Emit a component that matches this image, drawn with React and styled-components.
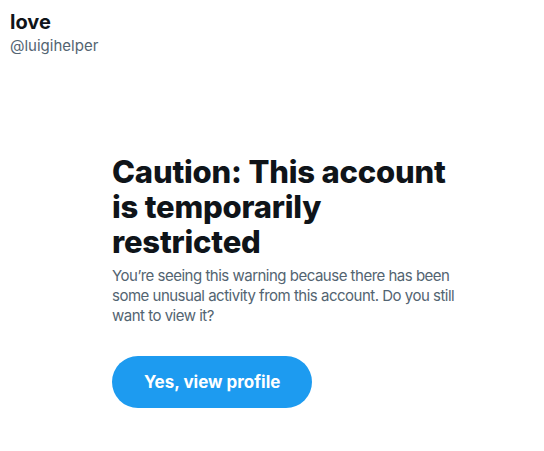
import React from "react";
import styled, {createGlobalStyle} from "styled-components";

const GlobalStyle = createGlobalStyle`
  body {
    margin: 0;
    background: #ffffff;
    font-family: Inter, "Liberation Sans", Arial, sans-serif;
  }
`;

const Page = styled.div`
  width: 544px;
  height: 451px;
  display: flex;
  flex-direction: column;
  background: #ffffff;
`;

const Header = styled.div`
  padding: 10px 10px 0 10px;
  display: flex;
  flex-direction: column;
`;

const Name = styled.div`
  font-size: 20px;
  font-weight: 700;
  line-height: 24px;
  color: #0f1419;
`;

const Handle = styled.div`
  font-size: 15px;
  line-height: 20px;
  color: #536471;
  margin-top: 2px;
`;

const Notice = styled.div`
  width: 372px;
  margin: 98px 0 0 112px;
  display: flex;
  flex-direction: column;
`;

const Title = styled.h1`
  margin: 0;
  max-width: 345px;
  font-size: 31px;
  font-weight: 800;
  line-height: 35px;
  letter-spacing: -0.2px;
  color: #0f1419;
`;

const Text = styled.p`
  margin: 7px 0 0 0;
  font-size: 15px;
  line-height: 20px;
  letter-spacing: -0.5px;
  color: #536471;
`;

const Button = styled.button`
  margin-top: 30px;
  align-self: flex-start;
  height: 52px;
  padding: 0 32px;
  border: none;
  border-radius: 9999px;
  background: #1d9bf0;
  color: #ffffff;
  font-family: inherit;
  font-size: 17px;
  font-weight: 700;
  cursor: pointer;
`;

const App = () => {
    return (
        <Page>
            <GlobalStyle/>
            <Header>
                <Name>love</Name>
                <Handle>@luigihelper</Handle>
            </Header>
            <Notice>
                <Title>Caution: This account is temporarily restricted</Title>
                <Text>You’re seeing this warning because there has been some unusual activity from this account. Do you still want to view it?</Text>
                <Button>Yes, view profile</Button>
            </Notice>
        </Page>
    );
};

export default App;
